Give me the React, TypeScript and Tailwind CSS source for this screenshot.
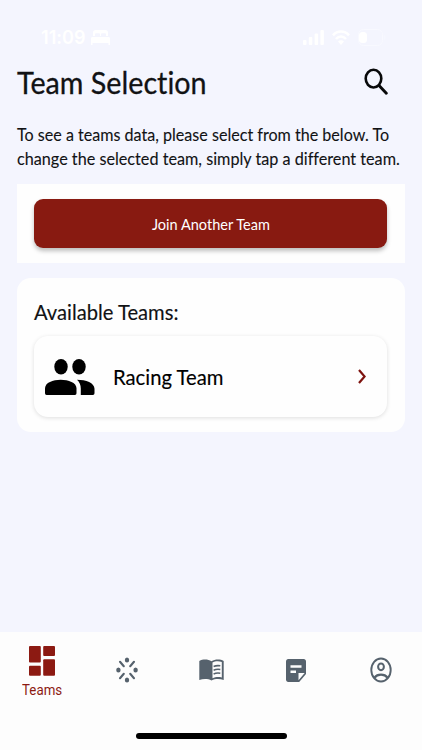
import type { ReactNode } from "react";

const tabs = [
  { name: "Teams", icon: <DashboardIcon />, active: true },
  { name: "Activity", icon: <SparkIcon /> },
  { name: "Library", icon: <BookIcon /> },
  { name: "Notes", icon: <NoteIcon /> },
  { name: "Profile", icon: <ProfileIcon /> },
];

function DashboardIcon() {
  return (
    <svg className="h-[30px] w-[26px]" viewBox="0 0 26 30" fill="currentColor">
      <rect width="11.8" height="16.4" rx="1" />
      <rect x="14.2" width="11.8" height="10" rx="1" />
      <rect y="19.8" width="11.8" height="10" rx="1" />
      <rect x="14.2" y="13.3" width="11.8" height="16.5" rx="1" />
    </svg>
  );
}

function SparkIcon() {
  return (
    <svg className="h-[26px] w-[22px]" viewBox="0 0 22 26" fill="currentColor">
      <ellipse cx="11" cy="3" rx="2.2" ry="2.5" />
      <ellipse cx="11" cy="23" rx="2.2" ry="2.5" />
      <ellipse cx="2.4" cy="13" rx="2.2" ry="2.5" />
      <ellipse cx="19.6" cy="13" rx="2.2" ry="2.5" />
      <path
        d="M4 4.8l3.8 4.4M18 4.8l-3.8 4.4M4 21.2l3.8-4.4M18 21.2l-3.8-4.4"
        stroke="currentColor"
        strokeWidth="2.1"
        strokeLinecap="round"
      />
    </svg>
  );
}

function BookIcon() {
  return (
    <svg className="h-[22px] w-[25px]" viewBox="0 0 25 22" fill="currentColor">
      <path d="M.3 2C3.8.1 9 .1 12.5 2.3 16 .1 21.2.1 24.7 2v19c-3.7-1.5-8.6-1.5-12.2.4C9 19.5 4 19.5.3 21z" />
      <path d="M13.5 3.5c2.7-1.5 6.4-1.6 9.3-.5v15.4c-3-.8-6.5-.6-9.3.8z" fill="#fdfdfd" />
      <path
        d="M14.6 7.5c2-.9 4.3-1.1 6.7-.7M14.6 11.2c2-.9 4.3-1.1 6.7-.7M14.6 14.9c2-.9 4.3-1.1 6.7-.7"
        fill="none"
        stroke="currentColor"
        strokeWidth="1.6"
      />
    </svg>
  );
}

function NoteIcon() {
  return (
    <svg className="h-[23px] w-5" viewBox="0 0 20 23" fill="currentColor">
      <path d="M2.2 0h15.6C19 0 20 1.1 20 2.5v12.6L13.2 23h-11C1 23 0 21.9 0 20.5v-18C0 1.1 1 0 2.2 0z" />
      <path d="M4.5 6.2h11v2.5h-11zM4.5 11.4h5.5v2.5H4.5zM12.5 21.2v-7.3h6.2z" fill="#fdfdfd" />
    </svg>
  );
}

function ProfileIcon() {
  return (
    <svg className="h-[26px] w-[22px]" viewBox="0 0 22 26" fill="none" stroke="currentColor">
      <ellipse cx="11" cy="13" rx="9.7" ry="11.5" strokeWidth="1.9" />
      <ellipse cx="11" cy="9.8" rx="2.9" ry="3.4" strokeWidth="2" />
      <path d="M4.3 20.7c3.3-4.1 10.1-4.1 13.4 0" strokeWidth="2.2" />
    </svg>
  );
}

function PeopleIcon() {
  return (
    <svg className="h-9 w-[50px]" viewBox="0 0 50 36" fill="#000">
      <ellipse cx="16" cy="7.7" rx="6.7" ry="7.7" />
      <ellipse cx="34" cy="7.7" rx="6.7" ry="7.7" />
      <path d="M0 29.5C0 23.6 8 20.8 15.7 20.8s15.8 2.8 15.8 8.7V34c0 1.200-.6 2-1.600 2H1.600C.6 36 0 35.200 0 34z" />
      <path d="M32 20.8c9 0 17.5 3.2 17.5 9V34c0 1.200-.6 2-1.600 2H35.800v-6.200c0-3.700-1.300-6.700-3.800-9z" />
    </svg>
  );
}

function StatusBar() {
  return (
    <div className="flex h-[60px] items-start justify-between pt-[26px] pr-9 pl-[41px] text-white">
      <div className="flex h-[22px] items-center gap-[5px]">
        <span className="w-[45px] origin-left scale-x-[0.95] font-['Inter'] text-[19px] leading-none font-semibold">
          11:09
        </span>
        <svg className="h-[15px] w-[19px]" viewBox="0 0 19 15" fill="currentColor">
          <path d="M2 6V2.5C2 1 3 0 4.5 0h10C16 0 17 1 17 2.5V6h-2V4.5c0-.8-.4-1.200-1.200-1.200h-2.600c-.8 0-1.200.4-1.200 1.200V6H9V4.500c0-.8-.4-1.200-1.200-1.200H5.200C4.400 3.300 4 3.700 4 4.500V6z" />
          <path d="M0 8.5C0 7.500.7 7 1.500 7h16c.8 0 1.500.5 1.500 1.500V15h-1.500v-2h-16v2H0z" />
        </svg>
      </div>
      <div className="flex h-[22px] items-center gap-2">
        <svg className="h-[15px] w-[21px]" viewBox="0 0 21 15" fill="currentColor">
          <rect y="10" width="3.5" height="5" rx="1" />
          <rect x="5.8" y="7" width="3.5" height="8" rx="1" />
          <rect x="11.6" y="3.5" width="3.5" height="11.5" rx="1" />
          <rect x="17.4" width="3.5" height="15" rx="1" />
        </svg>
        <svg className="h-[15px] w-[18px]" viewBox="0 0 18 15" fill="none" stroke="currentColor" strokeWidth="2.6">
          <path d="M1 5.300c4.600-5 11.400-5 16 0M4 9c3-3.300 7-3.300 10 0" />
          <path d="M6 11.500c1.800-1.800 4.200-1.800 6 0L9 15z" fill="currentColor" stroke="none" />
        </svg>
        <svg className="h-[17px] w-7" viewBox="0 0 28 17" fill="none">
          <rect x=".5" y=".5" width="24" height="16" rx="5" stroke="#f8f9ff" />
          <path d="M26.500 6c1 1 1 4 0 5z" fill="#f8f9ff" />
          <rect x="1" y="3" width="8" height="11" rx="3.5" fill="currentColor" />
        </svg>
      </div>
    </div>
  );
}

function Card({ className, children }: { className?: string; children: ReactNode }) {
  return <section className={`mr-[17.5px] ml-[17px] bg-[#fefefe] pr-[17.5px] pl-[17px] ${className}`}>{children}</section>;
}

export default function App() {
  return (
    <div className="flex h-[750px] w-[422px] flex-col overflow-hidden bg-[#f4f5fe] font-['Lato',sans-serif] text-[#111214] [font-variant-ligatures:none]">
      <StatusBar />

      <header className="flex h-[47px] items-center justify-between pr-[34px] pl-[17px]">
        <h1 className="origin-left scale-x-[0.926] pb-0.5 text-[31px] leading-none whitespace-nowrap [-webkit-text-stroke:0.3px]">
          Team Selection
        </h1>
        <button aria-label="Search" className="-mt-1">
          <svg className="h-[27px] w-6" viewBox="0 0 24 27" fill="none" stroke="#08090a" strokeLinecap="round">
            <ellipse cx="9.5" cy="10.6" rx="7.8" ry="8.9" strokeWidth="2.6" />
            <path d="M15.5 18l6.8 7.3" strokeWidth="2.9" />
          </svg>
        </button>
      </header>

      <p className="mt-4 h-[61px] pl-[17px] text-[17px] leading-6 whitespace-nowrap [-webkit-text-stroke:0.1px]">
        <span className="block w-max origin-left scale-x-[0.947]">
          To see a teams data, please select from the below. To
        </span>
        <span className="block w-max origin-left scale-x-[0.953]">
          change the selected team, simply tap a different team.
        </span>
      </p>

      <Card className="h-[79px] pt-[15px]">
        <button className="flex h-[49px] w-full items-center justify-center rounded-[9px] bg-[#881a11] text-white shadow-[0_3px_4px_rgba(0,0,0,0.25)]">
          <span className="scale-x-[0.908] text-base leading-none">Join Another Team</span>
        </button>
      </Card>

      <Card className="mt-[15px] h-[154px] rounded-[14px] pt-[22px]">
        <h2 className="h-9 w-max origin-left scale-x-[0.917] text-[22px] leading-6 [-webkit-text-stroke:0.15px]">
          Available Teams:
        </h2>
        <button className="flex h-[81px] w-full items-center rounded-[14px] bg-[#fefefe] pr-[21px] pl-[10.5px] shadow-[0_1px_4px_rgba(0,0,0,0.13)]">
          <PeopleIcon />
          <span className="ml-[18.5px] origin-left scale-x-[0.921] text-[22px] leading-none text-black [-webkit-text-stroke:0.15px]">
            Racing Team
          </span>
          <svg className="ml-auto h-[15px] w-2" viewBox="0 0 8 15" fill="none" stroke="#7e130f" strokeWidth="2.2">
            <path d="M1 1l5.600 6.500L1 14" />
          </svg>
        </button>
      </Card>

      <nav className="mt-auto h-[118px] bg-[#fdfdfd]">
        <ul className="grid h-[101px] w-[423px] grid-cols-5">
          {tabs.map((tab) => (
            <li key={tab.name}>
              <button
                aria-label={tab.name}
                className={`flex w-full flex-col items-center justify-center ${
                  tab.active ? "h-[79px] text-[#8c1a12]" : "h-[76px] text-[#56626d]"
                }`}
              >
                {tab.icon}
                {tab.active && (
                  <span className="mt-1.5 scale-x-[0.95] font-['Roboto'] text-sm leading-4">{tab.name}</span>
                )}
              </button>
            </li>
          ))}
        </ul>
        <div className="mx-auto h-1.5 w-[151px] rounded-full bg-black" />
      </nav>
    </div>
  );
}
